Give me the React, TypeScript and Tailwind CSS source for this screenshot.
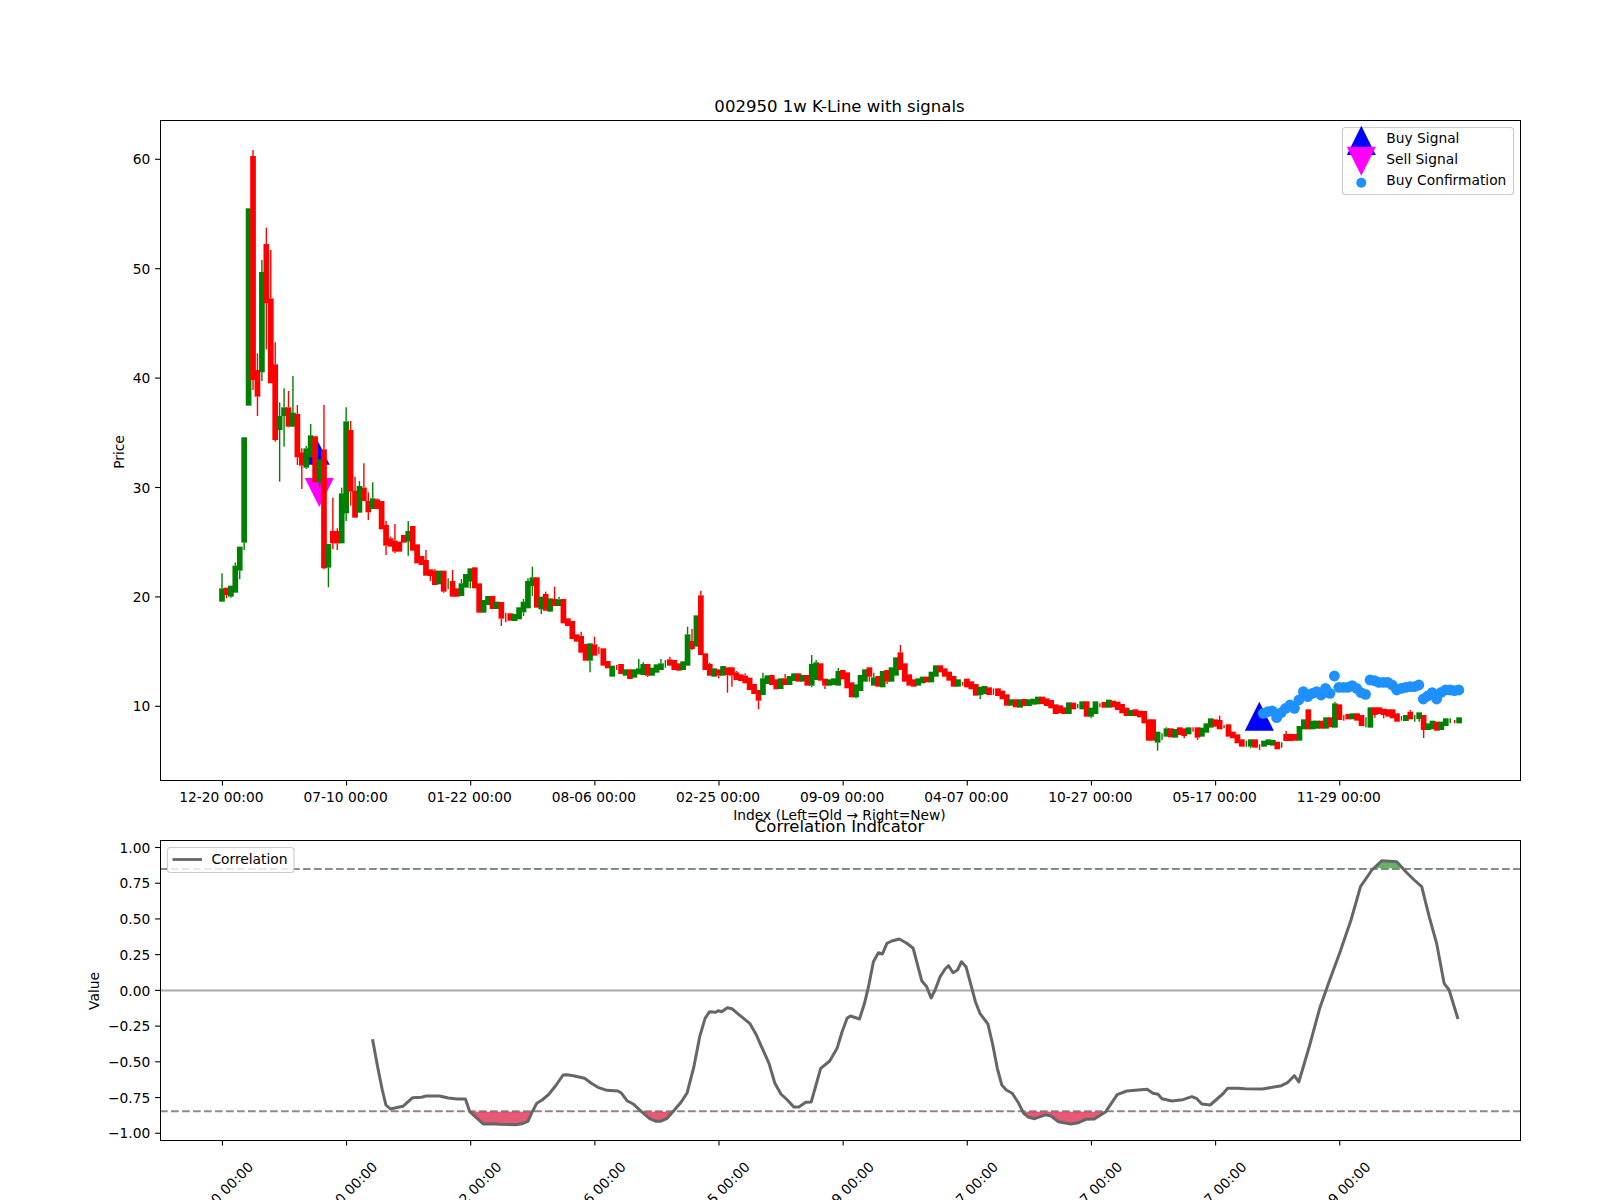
import React from "react";

type C = [string, number, number, number?, number?];

// values: y in 3x crops, converted with the base of each section
const s1: C[] = [
  ["g",805,845,760,0],["r",803,825,0,835],["g",797,830,0,833],["g",737,818,728,0],["g",680,752,0,778],["g",352,668,0,690],
  ["g",-335,257],["r",-492,180,-510,210],["r",150,230,100,288],["g",-144,157,-180,183],["r",-228,-50,-277,88],["r",-65,190,-210,0],
  ["r",133,360,67,365],["g",288,330,247,485],["g",262,288,205,380],["r",262,320,213,322],["g",278,320,168,322],["r",282,412,255,435],
  ["r",397,437,385,507],["g",385,443,378,447],["g",346,412,312,0],["r",349,487],["g",418,487,0,503],["r",388,745,255,748],
  ["g",672,743,0,802],["r",633,670,533,688],["r",633,670,625,690],["g",520,670,503,0],["g",304,580,262,603],["r",330,515,303,557],
  ["r",512,593,470,0],["g",498,578,483,0],["r",503,543,430,0],["r",543,577,517,600],["g",535,567,487,0],["r",538,567,535,0],
  ["r",543,628],["r",615,677,603,705],["r",655,680,650,0],["r",662,695,612,700],["r",665,695],
];
const s2: C[] = [
  ["r",105,128],["g",93,125,63,167],["r",78,152],["r",133,190],["r",168,195],["r",180,227,150,0],["r",208,228,0,243],["r",212,255,207,0],
  ["g",212,253],["r",212,275,0,278],["g",0,0,235,268],["r",243,290,210,0],["r",265,290],["g",250,288,237,0],["g",222,263],["g",205,245,0,265],
  ["r",202,265],["r",250,338],["g",300,338],["g",288,315],["r",288,327],["g",305,327],["r",306,356,0,378],["r",0,0,338,367],["r",340,362],
  ["g",342,363],["g",322,358],["g",305,337,297,348],["g",243,325,235,0],["g",232,258,200,288],["r",232,323],["g",290,328,0,342],["r",282,332,275,0],
  ["g",295,335],["r",297,318,260,0],["g",298,318,290,0],["r",297,370],["r",355,378],["r",363,417],["r",403,425],["r",408,458,395,0],["r",432,482],
  ["g",430,482,0,517],["r",433,467,410,0],["r",0,0,440,462],["r",445,497],["r",483,505],["g",497,530],["r",0,0,495,510],["r",492,522],["g",508,527],
  ["r",508,537],["g",508,533],["g",505,523,477,0],["g",492,525,487,0],["r",492,527,0,531],["g",503,527],["g",493,518],["g",490,510,477,0],["g",0,0,480,503],
  ["r",478,497,470,0],["r",480,510],["r",490,512],["g",484,510],["g",403,497,380,0],["r",423,447,387,450],["g",346,440],["r",286,465,272,0],["r",460,510],
  ["r",492,527,488,0],["g",505,530],["r",508,527,0,535],["g",498,527],["r",502,525,0,578],["r",502,527,0,560],["r",517,540,513,0],["r",523,543],
  ["r",527,550,520,0],["r",533,570],["r",552,582],["r",570,602,0,628],
];
const s3: C[] = [
  ["g",175,225,158,0],["g",166,192],["r",165,195],["r",178,208],["g",175,207],["r",175,195,162,0],["g",168,195],["g",160,183],["r",160,185],["g",165,185],
  ["r",165,197],["g",132,197,105,202],["g",127,180,120,0],["r",130,182],["r",176,197,0,207],["g",178,197],["g",175,195],["g",153,197,144,0],["r",150,178],
  ["r",157,205],["r",187,232],["g",193,232,0,235],["g",165,213],["g",148,185],["r",142,170,0,185],["g",172,197,158,0],["r",168,200],["g",153,202],
  ["r",150,185,0,192],["g",142,185],["g",112,167],["r",97,150,75,0],["r",130,185],["r",163,197],["r",178,200],["g",175,197],["g",170,190],["r",170,187],
  ["g",155,187],["g",136,170],["r",136,157],["r",145,170],["r",155,182],["r",168,200],["g",178,200],["r",0,0,186,197],["r",176,202],["r",184,208],
  ["r",192,227],["g",200,225,0,237],["g",198,222],["r",202,225],["r",0,0,205,225],["r",205,228],["r",212,238],["r",223,257],["g",238,257],["r",238,262],
  ["g",238,263],["r",237,258],["g",238,258],["g",236,254],["g",230,253],["r",230,252],["r",235,258],["r",240,265],["r",253,282],["r",256,280],["r",262,282],
  ["g",247,282],["r",248,268],["g",0,0,252,265],["g",244,268],["r",244,290],["g",263,290,0,295],["g",244,282],["r",0,0,250,262],["r",246,263],["g",239,263],
  ["r",242,262],["r",245,270],["r",252,280],["r",263,288],["g",270,288],["r",268,288],["r",272,292],
];
const s4: C[] = [
  ["r",183,220],["r",208,272],["r",208,272],["g",245,278,0,302],["g",0,0,250,270],["g",235,260,232,0],["r",235,262],["g",237,263],["r",232,255],["r",235,258,0,265],
  ["g",232,253],["r",0,0,232,245],["r",232,263,0,270],["g",233,260],["g",220,248],["g",205,233],["r",208,230],["r",210,238,197,0],["g",0,0,225,235],["r",223,260],
  ["r",245,265],["r",253,280],["r",268,290],["g",0,0,272,290],["g",268,290,0,295],["r",268,293],["r",0,0,283,300],["g",272,290],["g",268,285],["g",270,287],["r",275,298],
  ["g",0,0,277,293],["r",252,273,243,0],["r",252,273],["r",252,272],["g",228,272],["g",208,238],["r",178,238],["g",212,238],["g",212,236],["r",212,236],["g",202,236],
  ["r",202,232],["g",160,233,155,0],["r",163,210],["r",0,0,195,212],["r",192,208],["g",190,208],["r",190,212],["r",195,228],["g",0,0,202,232],["g",172,233],
  ["r",172,195,0,203],["r",172,192],["r",176,195,0,205],["r",178,200],["r",178,205],["r",190,215],["g",0,0,198,212],["g",195,213],["r",185,208,180,0],["g",0,0,195,215],
  ["g",187,207,0,215],["r",195,240,0,264],["g",220,240],["g",212,238],["r",215,242],["g",215,240],["g",205,228],["g",0,0,205,220],["r",0,0,210,220],["g",202,220],
];

const conv = (a: C[], b: number) =>
  a.map(([c, t, bo, h, l]) => ({
    c: c === "r" ? "#ff0000" : "#008000",
    t: b + t / 3,
    b: b + bo / 3,
    h: h ? b + h / 3 : null,
    l: l ? b + l / 3 : null,
    empty: t === 0 && bo === 0,
  }));
const candles = [...conv(s1, 320), ...conv(s2, 500), ...conv(s3, 620), ...conv(s4, 650)];
const X0 = 222;
const DX = 4.434;
const xAt = (i: number) => X0 + DX * i;

const dotsY = [190,185,183,203,188,175,165,175,150,125,140,130,125,135,115,130,78,112,112,112,107,115,128,133,90,92,97,97,97,105,120,115,112,110,110,105,147,138,128,147,127,120,120,122,120];
const dots = dotsY.map((y, k) => [1140 + (370 + k * 13.33) / 3, 650 + y / 3]);

const z7: number[][] = [[700,808],[712,895],[722,960],[730,1005],[740,1017],[750,1014],[768,1009],[780,995],[790,983],[810,982],[820,978],[850,978],[870,984],[890,987],[908,987],[918,1025],[930,1040],[948,1062],[970,1061],[985,1063],[1020,1064],[1035,1061],[1048,1054],[1058,1025],[1068,1000],[1080,990],[1095,973],[1110,948],[1127,915],[1135,914],[1150,917],[1175,925],[1190,940],[1205,952],[1225,961],[1250,963],[1258,970],[1270,992],[1285,1003],[1300,1022],[1320,1045],[1335,1054],[1345,1054],[1360,1045],[1375,1022],[1392,995],[1405,968],[1420,890],[1433,800],[1445,745],[1455,725],[1468,727],[1475,722],[1482,725],[1495,713],[1505,716],[1520,733],[1545,760],[1560,795]];
const z8: number[][] = [[0,820],[18,880],[30,940],[42,972],[55,990],[68,1011],[78,1011],[92,997],[103,996],[122,895],[140,873],[155,835],[165,785],[175,745],[182,738],[200,747],[210,700],[218,650],[228,575],[238,548],[246,552],[255,520],[265,513],[280,507],[295,520],[308,535],[325,632],[335,650],[344,684],[352,660],[362,620],[372,597],[379,587],[388,608],[397,600],[405,575],[414,590],[425,650],[433,695],[442,730],[458,762],[468,825],[477,895],[486,945],[495,960],[507,970],[520,1000],[530,1030],[540,1042],[552,1046],[575,1034],[585,1038],[600,1055],[625,1062],[640,1058],[655,1048],[672,1047],[695,1025],[718,974],[737,963],[778,958],[790,970],[800,973],[808,986],[828,993],[850,989],[868,980],[878,986],[888,1002],[905,1005],[930,972],[940,955],[960,955],[975,956],[1010,957],[1030,952],[1048,947],[1060,938],[1074,917],[1083,936],[1103,835],[1125,715],[1145,630],[1165,550],[1188,450],[1207,350],[1230,300],[1250,272],[1280,275],[1300,308],[1315,330],[1330,350],[1345,440],[1360,520],[1375,640],[1385,660],[1403,747]];
const corr = [
  ...z7.map(([x, y]) => [60 + x / 2.24, 770 + y / 3]),
  ...z8.map(([x, y]) => [760 + x / 2.01, 770 + y / 3]),
];
const corrPts = corr.map((p) => `${p[0].toFixed(1)},${p[1].toFixed(1)}`).join(" ");
const firstX = corr[0][0];
const lastX = corr[corr.length - 1][0];

const topLabels = ["12-20 00:00","07-10 00:00","01-22 00:00","08-06 00:00","02-25 00:00","09-09 00:00","04-07 00:00","10-27 00:00","05-17 00:00","11-29 00:00"];
const tickX = (k: number) => 222.4 + 124.15 * k;
const priceTicks = [60, 50, 40, 30, 20, 10];
const priceY = (v: number) => 706.3 + (10 - v) * 10.94;
const valTicks = ["1.00","0.75","0.50","0.25","0.00","−0.25","−0.50","−0.75","−1.00"];
const valY = (k: number) => 847.5 + k * 35.72;

const Tri = ({ x, top, bottom, down, fill }: { x: number; top: number; bottom: number; down?: boolean; fill: string }) => (
  <polygon
    fill={fill}
    points={
      down
        ? `${x - 14.5},${top} ${x + 14.5},${top} ${x},${bottom}`
        : `${x},${top} ${x + 14.5},${bottom} ${x - 14.5},${bottom}`
    }
  />
);

export default function App() {
  return (
    <div className="w-[1600px] h-[1200px] overflow-hidden bg-white flex flex-col font-['DejaVu_Sans',sans-serif] text-[13.8px]">
      {/* Upper panel: K-line */}
      <svg width={1600} height={800} viewBox="0 0 1600 800" className="block shrink-0 overflow-visible">
        <text x={839.5} y={112} textAnchor="middle" className="text-[16.55px]">002950 1w K-Line with signals</text>
        <Tri x={315.2} top={435.7} bottom={464.7} fill="#0000ff" />
        <Tri x={319.3} top={478} bottom={507} down fill="#ff00ff" />
        <Tri x={1259.3} top={701.7} bottom={730.7} fill="#0000ff" />
        {dots.map(([x, y], i) => (
          <circle key={i} cx={x} cy={y} r={5.4} fill="#1e90ff" />
        ))}
        {candles.map((k, i) => {
          const x = xAt(i);
          return (
            <g key={i}>
              {k.h !== null && !k.empty && <line x1={x} x2={x} y1={k.h} y2={k.t} stroke={k.c} strokeWidth={1.4} />}
              {k.l !== null && !k.empty && <line x1={x} x2={x} y1={k.b} y2={k.l} stroke={k.c} strokeWidth={1.4} />}
              {k.empty && k.h !== null && k.l !== null && <line x1={x} x2={x} y1={k.h} y2={k.l} stroke={k.c} strokeWidth={1.4} />}
              {!k.empty && <rect x={x - 2.85} y={k.t} width={5.7} height={k.b - k.t} fill={k.c} />}
            </g>
          );
        })}
        <rect x={160.5} y={120.5} width={1360} height={660} fill="none" stroke="#000" strokeWidth={1} />
        {priceTicks.map((v) => (
          <g key={v}>
            <line x1={155.1} x2={160} y1={priceY(v)} y2={priceY(v)} stroke="#000" strokeWidth={1.1} />
            <text x={150.3} y={priceY(v) + 5} textAnchor="end">{v}</text>
          </g>
        ))}
        {topLabels.map((t, k) => (
          <g key={t}>
            <line x1={tickX(k)} x2={tickX(k)} y1={781} y2={785.4} stroke="#000" strokeWidth={1.1} />
            <text x={tickX(k) - 1} y={801.5} textAnchor="middle">{t}</text>
          </g>
        ))}
        <text transform="translate(124,452) rotate(-90)" textAnchor="middle">Price</text>
        <text x={839.5} y={820} textAnchor="middle">Index (Left=Old → Right=New)</text>

        {/* legend */}
        <rect x={1342.5} y={127.5} width={171} height={67} rx={3} fill="#fff" fillOpacity={0.8} stroke="#ccc" strokeWidth={1.1} />
        <Tri x={1361.3} top={125.7} bottom={155} fill="#0000ff" />
        <Tri x={1361.3} top={146.7} bottom={175.7} down fill="#ff00ff" />
        <circle cx={1361.3} cy={182.7} r={5} fill="#1e90ff" />
        <text x={1386.3} y={143}>Buy Signal</text>
        <text x={1386.3} y={164}>Sell Signal</text>
        <text x={1386.3} y={185}>Buy Confirmation</text>
      </svg>

      {/* Lower panel: correlation */}
      <svg width={1600} height={400} viewBox="0 800 1600 400" className="block shrink-0 overflow-visible">
        <defs>
          <clipPath id="below"><rect x={160} y={1111.4} width={1360} height={30} /></clipPath>
          <clipPath id="above"><rect x={160} y={840} width={1360} height={28.6} /></clipPath>
        </defs>
        <text x={839.5} y={832} textAnchor="middle" className="text-[16.55px]">Correlation Indicator</text>
        <line x1={160} x2={1520} y1={990.5} y2={990.5} stroke="#aaa" strokeWidth={2} />
        <line x1={160} x2={1520} y1={869} y2={869} stroke="#8c8c8c" strokeWidth={2.1} strokeDasharray="7.7 3.3" />
        <line x1={160} x2={1520} y1={1111.2} y2={1111.2} stroke="#8c8c8c" strokeWidth={2.1} strokeDasharray="7.7 3.3" />
        <polygon
          clipPath="url(#below)"
          fill="#dc143c"
          fillOpacity={0.7}
          points={`${corrPts} ${lastX},1111.2 ${firstX},1111.2`}
        />
        <polygon
          clipPath="url(#above)"
          fill="#008000"
          fillOpacity={0.6}
          points={`${corrPts} ${lastX},868.6 ${firstX},868.6`}
        />
        <polyline points={corrPts} fill="none" stroke="#666" strokeWidth={3} strokeLinejoin="round" />
        <rect x={160.5} y={840.5} width={1360} height={300} fill="none" stroke="#000" strokeWidth={1} />
        {valTicks.map((t, k) => (
          <g key={t}>
            <line x1={155.1} x2={160} y1={valY(k)} y2={valY(k)} stroke="#000" strokeWidth={1.1} />
            <text x={150.3} y={valY(k) + 5.2} textAnchor="end">{t}</text>
          </g>
        ))}
        {topLabels.map((t, k) => (
          <g key={t}>
            <line x1={tickX(k)} x2={tickX(k)} y1={1141} y2={1145.4} stroke="#000" strokeWidth={1.1} />
            <text transform={`translate(${tickX(k) + 2},1197.5) rotate(-45)`} textAnchor="middle">{t}</text>
          </g>
        ))}
        <text transform="translate(99,991) rotate(-90)" textAnchor="middle">Value</text>

        <rect x={167.5} y={847.5} width={126.5} height={25} rx={3} fill="#fff" fillOpacity={0.8} stroke="#ccc" strokeWidth={1.1} />
        <line x1={172.5} x2={202} y1={859.5} y2={859.5} stroke="#666" strokeWidth={2.8} />
        <text x={211.4} y={864}>Correlation</text>
      </svg>
    </div>
  );
}
